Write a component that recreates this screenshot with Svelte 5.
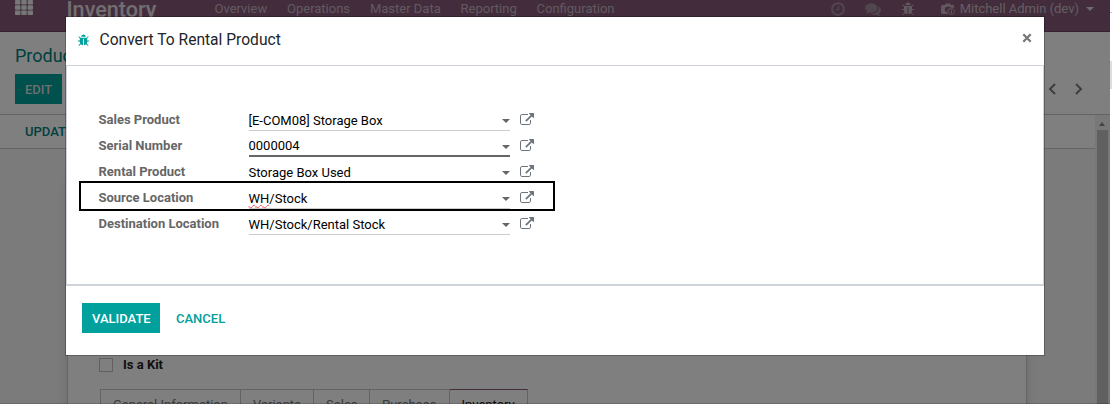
<script>
  const menus = ['Overview', 'Operations', 'Master Data', 'Reporting', 'Configuration'];
  const tabs = ['General Information', 'Variants', 'Sales', 'Purchase', 'Inventory'];
  const tabWidths = [141, 73, 56, 80, 78];
  const fields = [
    { label: 'Sales Product', value: '[E-COM08] Storage Box' },
    { label: 'Serial Number', value: '0000004', focus: true },
    { label: 'Rental Product', value: 'Storage Box Used' },
    { label: 'Source Location', value: '/Stock', prefix: 'WH', marked: true },
    { label: 'Destination Location', value: 'WH/Stock/Rental Stock' },
  ];
  const bug = 'M1696 960q0 26-19 45t-45 19h-224q0 171-67 290l208 209q19 19 19 45t-19 45q-18 19-45 19t-45-19l-198-197q-5 5-15 13t-42 28.5-65 36.5-82 29-97 13v-896h-128v896q-51 0-101.5-13.5t-87-33-66-39-43.5-32.5l-15-14-183 207q-20 21-48 21-24 0-43-16-19-18-20.5-44.5t15.5-46.5l202-227q-58-114-58-274h-224q-26 0-45-19t-19-45 19-45 45-19h224v-294l-173-173q-19-19-19-45t19-45 45-19 45 19l173 173h844l173-173q19-19 45-19t45 19 19 45-19 45l-173 173v294h224q26 0 45 19t19 45zm-480-576h-640q0-133 93.5-226.5t226.5-93.5 226.5 93.5 93.5 226.5z';
  const clock = 'M1024 544v448q0 14-9 23t-23 9h-320q-14 0-23-9t-9-23v-64q0-14 9-23t23-9h224v-352q0-14 9-23t23-9h64q14 0 23 9t9 23zm416 352q0-148-73-273t-198-198-273-73-273 73-198 198-73 273 73 273 198 198 273 73 273-73 198-198 73-273zm224 0q0 209-103 385.5t-279.5 279.5-385.5 103-385.5-103-279.5-279.5-103-385.5 103-385.5 279.5-279.5 385.5-103 385.5 103 279.5 279.5 103 385.5z';
  const comments = 'M1408 768q0 139-94 257t-256.5 186.5-353.5 68.5q-86 0-176-16-124 88-278 128-36 9-86 16h-3q-11 0-20.5-8t-11.5-21q-1-3-1-6.5t.5-6.5 2-6l2.5-5 3.5-5.5 4-5 4.5-5 4-4.5q5-6 23-25t26-29.5 22.5-29 25-38.5 20.5-44q-124-72-195-177t-71-224q0-139 94-257t256.5-186.5 353.5-68.5 353.5 68.5 256.5 186.5 94 257zm384 256q0 120-71 224.5t-195 176.5q10 24 20.5 44t25 38.5 22.5 29 26 29.5 23 25q1 1 4 4.5t4.5 5 4 5 3.5 5.5l2.5 5 2 6 .5 6.5-1 6.5q-3 14-13 22t-22 7q-50-7-86-16-154-40-278-128-90 16-176 16-271 0-472-132 58 4 88 4 161 0 309-45t264-129q125-92 192-212t67-254q0-77-23-152 129 71 204 178t75 230z';
  const external = 'M1408 928v320q0 119-84.5 203.5t-203.5 84.5h-832q-119 0-203.5-84.5t-84.5-203.5v-832q0-119 84.5-203.5t203.5-84.5h704q14 0 23 9t9 23v64q0 14-9 23t-23 9h-704q-66 0-113 47t-47 113v832q0 66 47 113t113 47h832q66 0 113-47t47-113v-320q0-14 9-23t23-9h64q14 0 23 9t9 23zm384-864v512q0 26-19 45t-45 19-45-19l-176-176-652 652q-10 10-23 10t-23-10l-114-114q-10-10-10-23t10-23l652-652-176-176q-19-19-19-45t19-45 45-19h512q26 0 45 19t19 45z';
</script>

<div class="screen">
  <div class="app">
    <header class="navbar">
      <svg class="apps" viewBox="0 0 18 15">
        {#each [0, 5.3, 10.6] as y}
          {#each [0, 6.3, 12.6] as x}
            <rect {x} {y} width="5.4" height="4.4" rx=".7" />
          {/each}
        {/each}
      </svg>
      <span class="brand">Inventory</span>
      <nav>
        {#each menus as m}<span>{m}</span>{/each}
      </nav>
      <div class="systray">
        <svg class="dim clock" viewBox="0 0 1792 1792"><path d={clock} /></svg>
        <svg class="dim chat" viewBox="0 0 1792 1792"><path d={comments} /></svg>
        <svg class="bug" viewBox="0 0 1792 1792"><path d={bug} /></svg>
        <svg class="cam" viewBox="0 0 14 12">
          <path fill-rule="evenodd" d="M1.5 2H4L4.8.5h4L9.7 2h2q1.3 0 1.3 1.3v1.8a4.4 4.4 0 0 0-6 5.8H1.5Q0 10.900 0 9.500v-6Q0 2 1.500 2zM6.500 3.500a3 3 0 0 0-.5 5.900a5 5 0 0 1 3.500-4.800a3 3 0 0 0-3-1.100z" />
          <circle cx="10.500" cy="8.400" r="3" fill="none" stroke="currentColor" stroke-width=".8" />
          <path d="M10 7.800h1V10.200h-1zM10 6.200h1v1h-1z" />
        </svg>
        <span class="user">Mitchell Admin (dev)</span>
        <i class="caret"></i>
      </div>
    </header>
    <section class="control">
      <div class="crumb">Products</div>
      <div class="actions">
        <span class="btn">EDIT</span>
        <div class="pager">
          <svg viewBox="0 0 8 12"><path d="M7 1L2 6l5 5" /></svg>
          <svg viewBox="0 0 8 12"><path d="M1 1l5 5-5 5" /></svg>
        </div>
      </div>
    </section>
    <div class="content">
      <div class="main">
        <div class="status">UPDATE QUANTITY</div>
        <div class="backdrop">
          <div class="sheet">
            <div class="kit"><i></i><b>Is a Kit</b></div>
            <div class="tabs">
              {#each tabs as t, i}
                <span class:active={i === 4} style:width="{tabWidths[i]}px">{t}</span>
              {/each}
            </div>
          </div>
        </div>
      </div>
      <div class="scroll"><i class="up"></i><i class="thumb"></i></div>
    </div>
    <div class="overlay"></div>
  </div>
  <div class="edge"></div>

  <div class="modal">
    <div class="head">
      <svg viewBox="0 0 1792 1792"><path d={bug} /></svg>
      <h4>Convert To Rental Product</h4>
      <svg class="close" viewBox="0 0 10 10"><path d="M1.300 1.300l7.400 7.400M8.700 1.300l-7.400 7.400" /></svg>
    </div>
    <div class="body">
      {#each fields as f}
        <div class="row" class:focus={f.focus}>
          <label>{f.label}</label>
          <div class="input">
            <span>{#if f.prefix}<u>{f.prefix}</u>{/if}{f.value}</span><i class="caret"></i>
          </div>
          <svg viewBox="0 0 1792 1792"><path d={external} /></svg>
          {#if f.marked}<div class="mark"></div>{/if}
        </div>
      {/each}
    </div>
    <div class="foot">
      <span class="btn">VALIDATE</span>
      <span class="link">CANCEL</span>
    </div>
  </div>
</div>

<style>
  :global(body) { margin: 0; background: #fff; }
  .screen { position: relative; width: 1112px; height: 404px; overflow: hidden; display: flex; font: 13px/20px Roboto, sans-serif; }
  .screen * { box-sizing: border-box; }
  svg { fill: currentColor; flex: none; display: block; }
  .app { position: relative; width: 1110px; height: 404px; display: flex; flex-direction: column; background: #fff; }
  .edge { width: 2px; height: 404px; background: linear-gradient(#fff 12px, #ccc 12px 13px, #fff 13px 61px, #ddd 61px 89px, #fff 89px); }
  .overlay { position: absolute; inset: 0; background: rgba(0, 0, 0, .5); border-bottom: 1px solid rgba(0, 0, 0, .15); }
  .navbar { height: 32px; flex: none; background: #875a7b; border-bottom: 1px solid #68465f; display: flex; align-items: flex-start; padding-left: 15px; color: #dcd6da; }
  .apps { width: 18px; height: 15px; color: #eee; }
  .brand { flex: none; font-size: 21.600px; line-height: 22px; font-weight: 500; margin-left: 33.500px; width: 148px; margin-top: -1.500px; color: #e4dce1; }
  nav { display: flex; gap: 19.800px; line-height: 17px; color: #c4b3bf; white-space: nowrap; }
  .systray { margin-left: auto; display: flex; height: 17px; align-items: center; padding-right: 16px; }
  .dim { color: #a38a9c; }
  .clock { width: 16px; height: 16px; margin-right: 19px; }
  .chat { width: 16px; height: 16px; margin-right: 20px; }
  .bug { width: 14px; height: 14px; margin-right: 26px; }
  .systray .bug, .cam { color: #c4b3bf; }
  .cam { width: 14px; height: 12px; margin-right: 5px; }
  .user { color: #c9bcc5; white-space: nowrap; }
  .caret { display: block; border: 4px solid transparent; border-top-color: currentColor; border-bottom: 0; }
  .systray .caret { margin-left: 7px; }
  .control { height: 83px; flex: none; border-bottom: 1px solid #c8c8cb; padding: 13px 27px 0 15px; }
  .crumb { font-size: 18px; line-height: 22px; color: #00807d; }
  .actions { display: flex; justify-content: space-between; margin-top: 7px; height: 30px; align-items: center; }
  .btn { background: #00a09d; color: #fff; font-weight: 500; height: 30px; line-height: 31px; padding: 0 10px; }
  .control .btn { width: 47px; color: #ddd; }
  .pager { display: flex; gap: 19px; color: #777c85; }
  .pager svg { width: 8px; height: 12px; fill: none; stroke: currentColor; stroke-width: 2; }
  .content { flex: 1; display: flex; min-height: 0; }
  .main { width: 1095px; display: flex; flex-direction: column; }
  .status { height: 34px; flex: none; line-height: 34px; padding-left: 25px; font-weight: 500; color: #00807d; border-bottom: 1px solid #c7cbd2; }
  .backdrop { flex: 1; background: #f7f7f7; padding: 12px 68px 0 67px; overflow: hidden; }
  .sheet { height: 300px; background: #fff; border: 1px solid #c8c8d3; box-shadow: 0 5px 20px -15px #000; padding: 195px 32px 0 31px; }
  .kit { display: flex; align-items: center; gap: 10px; height: 16px; color: #222; }
  .kit i { width: 14px; height: 14px; border: 1px solid #c0c0c0; }
  .kit b { font-weight: 700; }
  .tabs { display: flex; margin: 16px 0 0 1px; }
  .tabs span { border: 1px solid #c7c7cc; border-left-width: 0; padding: 5px 12px; height: 40px; white-space: nowrap; color: #777; }
  .tabs span:first-child { border-left-width: 1px; }
  .tabs .active { color: #222; border-top-color: #875a7b; padding-left: 11.500px; }
  .scroll { width: 15px; background: #f1f1f1; padding: 7px 2px 0; }
  .scroll .up { display: block; margin: 0 2px 4px; width: 0; border: 3.500px solid transparent; border-bottom: 4px solid #888; border-top: 0; }
  .thumb { display: block; height: 300px; background: #c1c1c1; }
  .modal { position: absolute; left: 66px; top: 17px; width: 978px; height: 338px; background: #fff; box-shadow: 0 0 0 1px rgba(0, 0, 0, .25); display: flex; flex-direction: column; }
  .head { height: 48px; flex: none; display: flex; align-items: center; padding: 0 12.500px 3px 11px; color: #00a09d; }
  .head svg { width: 13px; height: 13px; margin-top: 1px; }
  h4 { margin: 0 auto 0 9.500px; font-size: 15.600px; font-weight: 400; color: #212529; }
  .head .close { width: 10px; height: 10px; margin: 0 0 3px; stroke: #777; stroke-width: 2.300; fill: none; }
  .body { height: 221px; flex: none; border: 1px solid #ced4da; border-bottom-width: 2px; padding: 41px 31px 0; }
  .row { position: relative; height: 26px; display: flex; align-items: flex-start; color: #666; }
  label { width: 150.500px; padding-left: .5px; font-weight: 700; line-height: 26px; white-space: nowrap; }
  .input { width: 261px; height: 24px; border-bottom: 1px solid #ccc; display: flex; justify-content: space-between; color: #000; line-height: 28px; }
  .focus .input { line-height: 26px; border-bottom: 2px solid #666; }
  .input .caret { margin-top: 12px; color: #666; }
  .row > svg { width: 14px; height: 14px; margin: 6px 0 0 10.500px; color: #6c757d; }
  u { text-decoration: underline wavy #f0525f 1px; text-underline-offset: 1px; text-decoration-skip-ink: none; }
  .mark { position: absolute; left: -19px; top: -4px; width: 476px; height: 30px; border: 2px solid #000; }
  .foot { padding: 17px 16px; display: flex; gap: 16px; }
  .foot .btn { width: 78px; }
  .link { color: #00a09d; font-weight: 500; line-height: 31px; }
</style>
